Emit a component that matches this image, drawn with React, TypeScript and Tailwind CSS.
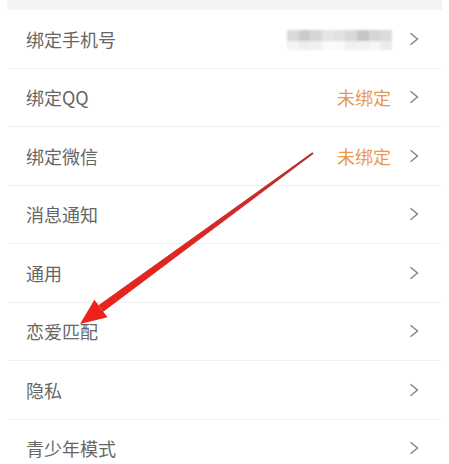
import React from "react";

const rows: { label: string; value?: "blur" | "unbound" }[] = [
  { label: "绑定手机号", value: "blur" },
  { label: "绑定QQ", value: "unbound" },
  { label: "绑定微信", value: "unbound" },
  { label: "消息通知" },
  { label: "通用" },
  { label: "恋爱匹配" },
  { label: "隐私" },
  { label: "青少年模式" },
];

function Chevron() {
  return (
    <svg width="10" height="14" viewBox="0 0 10 14" className="shrink-0">
      <path d="M1.5 1.2 L8.5 7 L1.5 12.8" fill="none" stroke="#808080" strokeWidth="1.4" strokeLinejoin="miter" />
    </svg>
  );
}

function Blurred() {
  const top = ["#d9d9d9", "#cacaca", "#d6d6d6", "#e5e5e5", "#e1e1e1", "#d8d8d8", "#c6c6c6", "#d5d5d5", "#dbdbdb"];
  const bottom = ["#f3f3f3", "#eeeeee", "#efefef", "#fafafa", "#fafafa", "#f0f0f0", "#f1f1f1", "#f6f6f6", "#ececec"];
  return (
    <div className="flex flex-col blur-[1px] mt-[2px]">
      <div className="flex">
        {top.map((c, i) => (
          <div key={i} className="w-[11.7px] h-[11px]" style={{ background: c }} />
        ))}
      </div>
      <div className="flex">
        {bottom.map((c, i) => (
          <div key={i} className="w-[11.7px] h-[9px]" style={{ background: c }} />
        ))}
      </div>
    </div>
  );
}

export default function App() {
  return (
    <div
      className="relative w-[449px] h-[464px] overflow-hidden bg-white"
      style={{ fontFamily: '"Noto Sans CJK SC", "Noto Sans", sans-serif' }}
    >
      <div className="mx-[7px] h-[10px] bg-[#f4f4f2]" />
      <div className="mx-[8px]">
        {rows.map((r) => (
          <div
            key={r.label}
            className="flex items-center h-[58.5px] border-b border-[#efefef] pl-[18px] pr-[22px]"
          >
            <span className="text-[18px] text-[#666666] leading-none">{r.label}</span>
            <div className="flex-1" />
            {r.value === "unbound" && (
              <span className="text-[18px] text-[#e69a4f] leading-none mr-[18px]">未绑定</span>
            )}
            {r.value === "blur" && (
              <div className="mr-[17px]">
                <Blurred />
              </div>
            )}
            <Chevron />
          </div>
        ))}
      </div>

      <svg className="absolute inset-0 pointer-events-none" width="449" height="464" viewBox="0 0 449 464">
        <defs>
          <linearGradient id="ag" x1="313" y1="153" x2="81" y2="325" gradientUnits="userSpaceOnUse">
            <stop offset="0" stopColor="#a93434" />
            <stop offset="0.3" stopColor="#d02b27" />
            <stop offset="1" stopColor="#ee221c" />
          </linearGradient>
        </defs>
        <polygon points="313.6,153.8 312.4,152.2 98.5,305.3 103.3,311.7" fill="url(#ag)" />
        <polygon points="80,324 107.4,317.3 94.4,299.7" fill="#ee221c" />
      </svg>
    </div>
  );
}
